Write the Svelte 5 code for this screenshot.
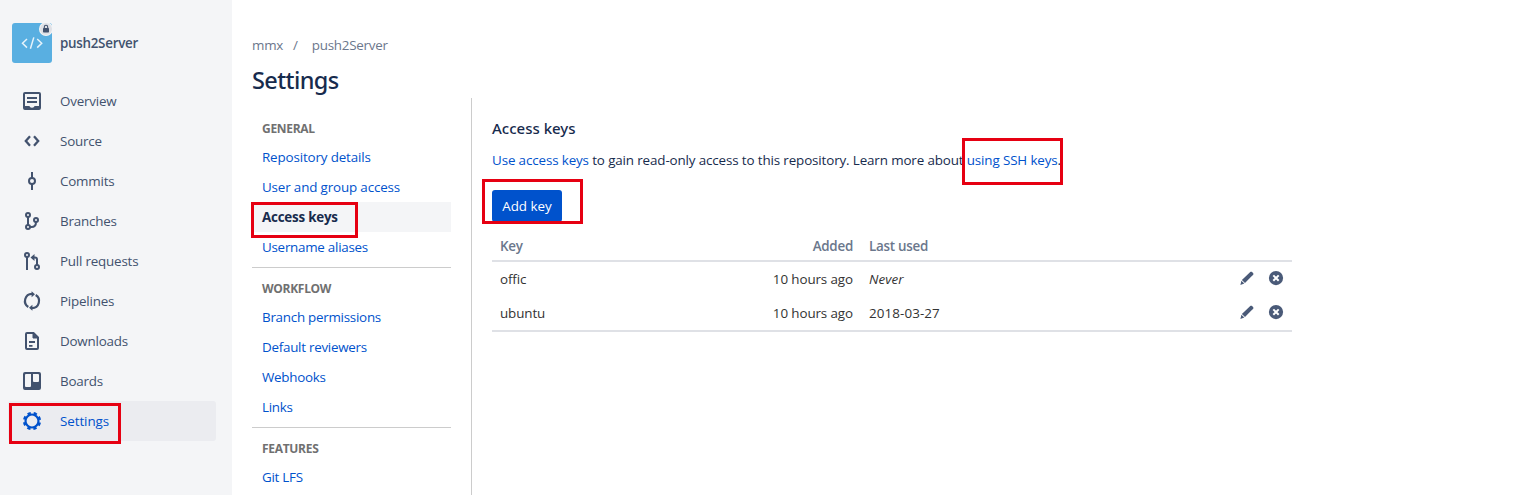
<script>
  const nav = ['Overview', 'Source', 'Commits', 'Branches', 'Pull requests', 'Pipelines', 'Downloads', 'Boards', 'Settings'];
  const groups = [
    { title: 'GENERAL', links: ['Repository details', 'User and group access', 'Access keys', 'Username aliases'] },
    { title: 'WORKFLOW', links: ['Branch permissions', 'Default reviewers', 'Webhooks', 'Links'] },
    { title: 'FEATURES', links: ['Git LFS'] }
  ];
  const keys = [
    { name: 'offic', added: '10 hours ago', used: 'Never' },
    { name: 'ubuntu', added: '10 hours ago', used: '2018-03-27' }
  ];
</script>

<div class="page">
  <aside>
    <div class="repo">
      <div class="avatar">
        <svg width="40" height="40" viewBox="0 0 40 40" fill="none" stroke="#e6f3fb" stroke-width="1.5">
          <path d="M15 16 10.500 20.300 15 24.600M25.200 16 29.700 20.300 25.200 24.600M21.800 14.400 18.400 25.800" />
        </svg>
        <span class="lock">
          <svg width="12" height="12" viewBox="0 0 12 12">
            <circle cx="6" cy="6" r="6" fill="#dfe1e6" />
            <path d="M4.300 5.500V3.900a1.700 1.700 0 0 1 3.400 0v1.600" fill="none" stroke="#42526e" stroke-width="1.100" />
            <rect x="3" y="5" width="6" height="4.400" rx=".7" fill="#42526e" />
          </svg>
        </span>
      </div>
      <span class="reponame">push2Server</span>
    </div>
    <nav>
      {#each nav as item}
        <div class="item" class:active={item === 'Settings'}>
          <svg width="24" height="24" viewBox="0 0 24 24" fill="none" stroke="currentColor" stroke-width="2">
            {#if item === 'Overview'}
              <rect x="4" y="4" width="16" height="16" rx="1" />
              <path d="M7 9h10M7 13h10" />
              <path d="M4 17h5.200c.6 0 .7 1.800 2.800 1.800s2.200-1.800 2.800-1.800H20v3H4z" fill="currentColor" stroke="none" />
            {:else if item === 'Source'}
              <path d="M10 7.200 5.800 12l4.200 4.800M14 7.200l4.200 4.800-4.200 4.800" stroke-width="2.300" />
            {:else if item === 'Commits'}
              <circle cx="12" cy="12" r="3" />
              <path d="M12 3v6M12 15v6" />
            {:else if item === 'Branches'}
              <circle cx="8" cy="6" r="2" /><circle cx="8" cy="18" r="2" /><circle cx="16" cy="11" r="2" />
              <path d="M8 8v8M10 18h1.500c3 0 4.500-1.600 4.500-5" />
            {:else if item === 'Pull requests'}
              <circle cx="7" cy="6" r="2" /><circle cx="17" cy="18" r="2" />
              <path d="M7 8v13M17 16v-5.500c0-1.300-.7-2-2-2h-3" />
              <path d="m14.500 5-4 3.500 4 3.500z" fill="currentColor" stroke="none" />
            {:else if item === 'Pipelines'}
              <path d="M8.300 18A7.100 7.100 0 0 1 12 4.900M15.700 6A7.100 7.100 0 0 1 12 19.100" stroke-width="2.200" />
              <path d="M11.600 2.200 15 5.300l-3.400 3zM12.400 15.700 9 18.700l3.400 3.100z" fill="currentColor" stroke="none" />
            {:else if item === 'Downloads'}
              <path d="M13.500 4H7a1 1 0 0 0-1 1v14a1 1 0 0 0 1 1h10a1 1 0 0 0 1-1V8.500z" />
              <path d="M13 4.500V9h4.500z" fill="currentColor" stroke-width="1" />
              <path d="M9 13h6M9 16.800h3.500" stroke-width="1.800" />
            {:else if item === 'Boards'}
              <path fill="currentColor" stroke="none" fill-rule="evenodd" d="M5 3h14a2 2 0 0 1 2 2v14a2 2 0 0 1-2 2H5a2 2 0 0 1-2-2V5a2 2 0 0 1 2-2zm1 2a1 1 0 0 0-1 1v11a1 1 0 0 0 1 1h4a1 1 0 0 0 1-1V5zm7 0v7a1 1 0 0 0 1 1h4a1 1 0 0 0 1-1V6a1 1 0 0 0-1-1z" />
            {:else}
              <circle cx="12" cy="12" r="6.500" stroke-width="2.200" />
              <circle cx="12" cy="12" r="8" stroke-width="2.200" stroke-dasharray="3.400 2.883" transform="rotate(10.300 12 12)" />
            {/if}
          </svg>
          <span>{item}</span>
        </div>
      {/each}
    </nav>
  </aside>

  <main>
    <div class="crumbs"><span>mmx</span><span class="slash">/</span><span>push2Server</span></div>
    <h1>Settings</h1>
    <div class="columns">
      <div class="menu">
        {#each groups as group}
          <section>
            <h2>{group.title}</h2>
            {#each group.links as link}
              <a class:selected={link === 'Access keys'}>{link}</a>
            {/each}
          </section>
        {/each}
      </div>
      <div class="content">
        <h3>Access keys</h3>
        <p><a>Use access keys</a> to gain read-only access to this repository. Learn more about <a>using SSH keys</a>.</p>
        <button>Add key</button>
        <div class="table">
          <div class="row head"><span>Key</span><span class="added">Added</span><span>Last used</span><span></span></div>
          <div class="body">
            {#each keys as key}
              <div class="row">
                <span>{key.name}</span>
                <span class="added">{key.added}</span>
                <span class:never={key.used === 'Never'}>{key.used}</span>
                <span class="actions">
                  <svg width="16" height="16" viewBox="0 0 16 16" fill="#4a5a78">
                    <path d="M9.700 2.500 11.200 1.100c.6-.6 1.300-.6 1.900 0l.9.900c.6.600.6 1.300 0 1.900L12.600 5.300 6 11.900 2.900 9z" />
                    <path d="m2.400 9.700 2.900 2.900-3.900 1.500z" />
                  </svg>
                  <svg width="16" height="16" viewBox="0 0 16 16">
                    <circle cx="8" cy="7.100" r="7.100" fill="#4a5a78" />
                    <path d="m5.300 4.400 5.400 5.400m0-5.400-5.400 5.400" stroke="#fff" stroke-width="2" />
                  </svg>
                </span>
              </div>
            {/each}
          </div>
        </div>
      </div>
    </div>
  </main>

  <div class="mark settings"></div>
  <div class="mark access"></div>
  <div class="mark add"></div>
  <div class="mark ssh"></div>
</div>

<style>
  :global(body) { margin: 0; background: #fff; }
  .page {
    position: relative; display: flex; width: 1520px; height: 495px; overflow: hidden;
    font: 13.4px/20px 'Open Sans', 'Noto Sans', sans-serif; letter-spacing: -0.1px; color: #172b4d;
  }
  aside { box-sizing: border-box; width: 232px; flex: none; padding: 23px 16px 0 8px; background: #f4f5f7; color: #42526e; }
  .repo { display: flex; align-items: center; height: 40px; gap: 8px; padding-left: 4px; margin-bottom: 18px; }
  .avatar { position: relative; width: 40px; height: 40px; border-radius: 3px; background: #59afe1; }
  .avatar svg { display: block; }
  .lock { position: absolute; top: -1px; right: -1px; padding: 1px; border-radius: 50%; background: #f4f5f7; }
  .reponame { font-weight: 600; letter-spacing: -0.28px; }
  .item { display: flex; align-items: center; height: 40px; gap: 16px; padding-left: 12px; border-radius: 3px; }
  .item span { letter-spacing: -0.2px; }
  .item.active { background: #ebecf0; color: #0052cc; }
  .item.active span { letter-spacing: -0.08px; }
  main { flex: 1; padding: 35px 0 0 20px; }
  .crumbs { display: flex; color: #6b778c; letter-spacing: -0.25px; }
  .slash { margin: 0 14px 0 10px; }
  h1 { margin: 11px 0 4px; font: 500 23.5px/28px 'Noto Sans', sans-serif; letter-spacing: -0.62px; }
  .columns { display: flex; height: 397px; }
  .menu { width: 199px; padding-right: 20px; border-right: 1px solid #ccc; }
  section { padding: 11px 0 0; border-bottom: 1px solid #ccc; box-sizing: border-box; height: 160px; }
  section:first-child { height: 170px; padding-top: 21px; }
  h2 { margin: 0 0 3px; padding-left: 10px; font-size: 12px; line-height: 20px; font-weight: 700; color: #707070; letter-spacing: -0.3px; }
  a { color: #0052cc; }
  .menu a { display: block; height: 30px; line-height: 30px; padding-left: 10px; letter-spacing: -0.15px; }
  section:nth-child(2) a, .menu a:last-child { letter-spacing: -0.26px; }
  .menu a.selected { background: #f4f5f7; color: #172b4d; font-weight: 700; letter-spacing: -0.22px; }
  .content { width: 800px; padding: 20px 0 0 20px; }
  h3 { margin: 0; font: 500 15px/20px 'Noto Sans', sans-serif; letter-spacing: 0; }
  p { margin: 12px 0 20px; line-height: 20px; letter-spacing: -0.13px; }
  button {
    display: block; width: 70px; height: 32px; padding: 0; border: 0; border-radius: 3px;
    background: #0052cc; color: #fff; font: inherit; letter-spacing: 0;
  }
  .table { margin-top: 12px; color: #333; }
  .row { display: grid; grid-template-columns: 180px 181px 300px 1fr; height: 34px; align-items: center; padding: 0 8px; }
  .row.head { height: 24px; padding-bottom: 2px; color: #6b778c; font-weight: 600; letter-spacing: -0.25px; }
  .added { text-align: right; margin-right: 8px; }
  .row span:nth-child(3) { padding-left: 8px; }
  .body { border-top: 2px solid #dfe1e6; border-bottom: 2px solid #dfe1e6; }
  .body .row span:nth-child(3) { letter-spacing: 0.1px; }
  .never { font-style: italic; }
  .actions { display: flex; justify-content: flex-end; gap: 13px; }
  .mark { position: absolute; box-sizing: border-box; border: 3px solid #e60012; }
  .settings { left: 9px; top: 403px; width: 112px; height: 41px; }
  .access { left: 251px; top: 202px; width: 107px; height: 36px; }
  .add { left: 482px; top: 179px; width: 101px; height: 45px; }
  .ssh { left: 962px; top: 138px; width: 101px; height: 47px; }
</style>
